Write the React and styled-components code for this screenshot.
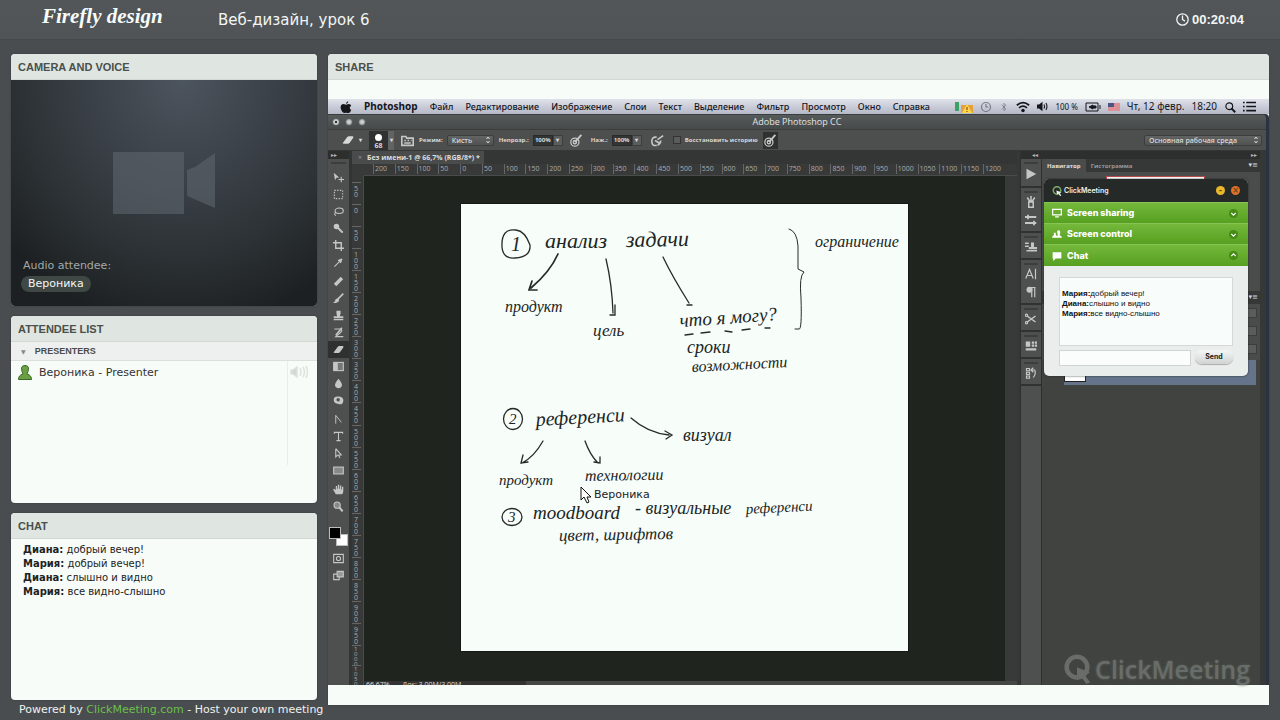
import React, {useState} from 'react';
import styled, {createGlobalStyle} from 'styled-components'

const GlobalStyle = createGlobalStyle`
  * { box-sizing: border-box; }
  body {
    margin: 0;
    background: #4a4d50;
    font-family: "DejaVu Sans", Verdana, sans-serif;
    color: #333;
  }
  button, input, select { font: inherit; color: inherit; margin: 0; padding: 0; border: 0; background: none; }
`

const Page = styled.div`
  display: flex;
  flex-direction: column;
  min-height: 100vh;
`

const Header = styled.header`
  display: flex;
  align-items: center;
  height: 40px;
  padding: 0 36px 0 42px;
  background: linear-gradient(#525659, #505457);
  border-bottom: 1px solid #45484a;
  color: #f3f6f4;
`

const Logo = styled.a`
  flex: 0 0 176px;
  font: italic bold 21px/32px "Liberation Serif", serif;
  color: #f7fcf9;
  text-decoration: none;
  margin-bottom: 8px;
`

const Title = styled.h1`
  flex: 1;
  margin: 0;
  font-size: 15px;
  font-weight: 400;
`

const Timer = styled.div`
  display: flex;
  align-items: center;
  gap: 3px;
  font: bold 13px/16px "Liberation Sans", Arial, sans-serif;
`

const Main = styled.main`
  flex: 1;
  display: grid;
  grid-template-columns: 306px minmax(0, 1fr);
  gap: 11px;
  padding: 14px 11px 0;
`

const Side = styled.div`
  display: flex;
  flex-direction: column;
  gap: 10px;
  padding-bottom: 5px;
`

const Panel = styled.section`
  display: flex;
  flex-direction: column;
  flex: ${p => p.$grow || '1 1 0'};
  border-radius: 4px 4px ${p => p.$square ? '0 0' : '4px 4px'};
  overflow: hidden;
  background: #f7fcf9;
  box-shadow: 0 0 2px #35383a;
`

const PanelTitle = styled.h2`
  flex: none;
  margin: 0;
  padding: 0 7px;
  height: 26px;
  font: bold 11px/27px "Liberation Sans", Arial, sans-serif;
  color: #4a504d;
  background: #dfe5e0;
  border-bottom: 1px solid #d2d8d4;
`

const Camera = styled.div`
  flex: 1;
  display: flex;
  flex-direction: column;
  align-items: flex-start;
  padding: 72px 10px 14px;
  background: radial-gradient(ellipse 75% 110% at 56% 0, #4c545e, #2d3236 70%, #1c2022);
  color: #a3a8a7;
  font-size: 11px;
  > svg { align-self: center; margin-bottom: auto; }
  > span { padding-left: 2px; line-height: 14px; }
`

const Pill = styled.b`
  margin-top: 3px;
  padding: 0 7px;
  border-radius: 8px;
  background: #3f4845;
  color: #f3f7f5;
  font-weight: 400;
  line-height: 16px;
`

const Group = styled.button`
  display: flex;
  align-items: center;
  gap: 9px;
  height: 19px;
  && { padding: 0 10px; background: #eeefef; border-bottom: 1px solid #dcdfdd; }
  font: bold 9px/18px "Liberation Sans", Arial, sans-serif;
  color: #4a4d4b;
  > i { font: 6px "DejaVu Sans"; color: #888; }
`

const Attendee = styled.div`
  display: grid;
  grid-template-columns: 18px 1fr 24px;
  align-items: center;
  height: 22px;
  padding: 0 3px 0 7px;
  gap: 3px;
  font-size: 11px;
`

const AttendeeBody = styled.div`
  flex: 1;
  margin-bottom: 38px;
  background: linear-gradient(90deg, transparent 276px, #e9eeea 276px, #e9eeea 277px, transparent 277px);
`

const Messages = styled.ul`
  margin: 0;
  padding: 4px 12px;
  list-style: none;
  font-size: 10px;
  line-height: 14px;
  color: #222;
`

const Footer = styled.footer`
  height: 15px;
  padding: 0 19px;
  font-size: 11px;
  line-height: 10px;
  color: #f0f3f1;
  a { color: #6cc04a; text-decoration: none; }
`

// ---- shared desktop

const Screen = styled.div`
  flex: 1;
  display: flex;
  flex-direction: column;
  padding: 19px 0 20px;
`

const MacBar = styled.nav`
  display: flex;
  align-items: center;
  height: 15px;
  padding: 0 13px 0 12px;
  background: linear-gradient(#dfe1ea, #b5b8c6);
  font: 10px/15px "Noto Sans", "Open Sans", sans-serif;
  color: #15161c;
  white-space: nowrap;
  > div { display: flex; align-items: center; gap: 12px; }
  > div + div { margin-left: auto; gap: 7px; }
  small { font-size: 8px; }
`

const MenuItem = styled.button`
  font-size: ${p => p.$app ? '10px' : '9px'};
  font-weight: ${p => p.$app ? 700 : 500};
`

const AppWindow = styled.div`
  flex: 1;
  display: flex;
  flex-direction: column;
  min-height: 0;
  margin-right: 3px;
  border-radius: 0 4px 0 0;
  background: #4d4e4e;
  box-shadow: 3px 0 0 #2c3340;
  color: #d8d8d8;
  font: 7px/10px "Open Sans", "Noto Sans", sans-serif;
`

const WindowBar = styled.div`
  display: grid;
  grid-template-columns: 1fr auto 1fr;
  align-items: center;
  height: 15px;
  padding: 0 4px;
  border-radius: 0 4px 0 0;
  background: linear-gradient(#555a5b, #474a4b);
  border-top: 1px solid #3a3d3e;
  font-size: 9px;
  color: #e3e6e5;
`

const Lights = styled.div`
  display: flex;
  gap: 5px;
  > i { width: 8px; height: 8px; border-radius: 50%; background: radial-gradient(#dfe5e3, #818786); border: 1px solid #5a5f5f; }
  > i:first-child { background: radial-gradient(#333 25%, #c5cac8 35%); }
`

const Options = styled.div`
  display: flex;
  align-items: center;
  gap: 5px;
  height: 22px;
  padding: 0 4px 0 14px;
  border-top: 1px solid #3b3c3c;
  border-bottom: 1px solid #353636;
  font-size: 6px;
  font-weight: 700;
  white-space: nowrap;
  > label { display: flex; align-items: center; gap: 4px; }
`

const Dropdown = styled.select`
  width: ${p => p.$width};
  height: 11px;
  && { padding: 0 4px; border: 1px solid #3c3d3d; background: linear-gradient(#626464, #505252); }
  appearance: none;
  border-radius: 2px;
  font-size: 7px;
  font-weight: 600;
  line-height: 9px;
`

const DropWrap = styled.span`
  display: inline-grid;
  align-items: center;
  margin-left: ${p => p.$end ? 'auto' : 0};
  > * { grid-area: 1 / 1; }
  > svg { justify-self: end; margin-right: 2px; pointer-events: none; }
`

const Percent = styled.span`
  display: flex;
  > input { width: 20px; height: 11px; background: #333434; border: 1px solid #292a2a; text-align: center; }
  > button { width: 10px; height: 11px; background: #5b5d5d; border: 1px solid #3c3d3d; line-height: 8px; }
`

const BrushGroup = styled.div`
  display: flex;
  margin: 0 1px 0 2px;
  > button + button { width: 6px; height: 19px; background: #626464; }
`

const BrushPick = styled.button`
  display: flex;
  flex-direction: column;
  align-items: center;
  width: 19px;
  height: 19px;
  && { padding-top: 3px; background: #303131; }
  font-size: 7px;
  line-height: 9px;
  > i { width: 7px; height: 7px; border-radius: 50%; background: #fff; }
`

const Tick = styled.input`
  appearance: none;
  width: 8px;
  height: 8px;
  && { border: 1px solid #333; background: #5a5b5b; }
`

const IconButton = styled.button`
  display: flex;
  align-items: center;
  justify-content: center;
  height: ${p => p.$h || '17px'};
  width: ${p => p.$w || '21px'};
  color: #c4c7c5;
  && { background: ${p => p.$on ? '#2f3030' : 'none'}; }
`

const Workspace = styled.div`
  flex: 1;
  display: grid;
  grid-template-columns: 24px minmax(0, 1fr) 3px 22px 218px 6px;
  min-height: 0;
  background: #363737;
`

const Tools = styled.div`
  background: #4e4f4f;
  border-right: 3px solid #323333;
`

const Strip = styled.div`
  height: 8px;
  background: #2d2e2e;
  font: 6px/7px "DejaVu Sans", sans-serif;
  color: #b5b5b5;
  padding: 0 3px;
  text-align: ${p => p.$end ? 'right' : 'left'};
`

const Grip = styled.div`
  height: 2px;
  margin: 3px 3px ${p => p.$gap || '5px'};
  background: #3c3d3d;
`

const ToolGroup = styled.div`
  margin-bottom: 2px;
`

const Swatches = styled.div`
  position: relative;
  height: 20px;
  margin: 12px 0 3px 1px;
  > i { position: absolute; width: 12px; height: 12px; border: 1px solid #bbb; background: #000; }
  > i + i { left: 7px; top: 7px; background: #fff; z-index: 0; }
  > i:first-child { z-index: 1; }
`

const Doc = styled.div`
  display: grid;
  grid-template: 13px 12px minmax(0, 1fr) 4px / 12px minmax(0, 1fr) 12px;
  background: #383939;
`

const DocTabs = styled.div`
  grid-column: 1 / -1;
  background: #343535;
  > button {
    height: 13px;
    padding: 0 4px 0 6px;
    background: #4a4b4b;
    font-weight: 700;
    line-height: 12px;
    color: #dcdcdc;
  }
  i { font-style: normal; font-weight: 400; color: #999; margin-right: 5px; }
`

const RulerX = styled.div`
  display: flex;
  grid-column: 2 / 4;
  padding-left: 9px;
  overflow: hidden;
  border-bottom: 1px solid #4a4b4b;
  color: #a9acaa;
  > span { flex: 0 0 calc((100% - 12px) / 29); height: 10px; padding-left: 1px; border-left: 1px solid #666; line-height: 9px; }
`

const RulerY = styled.div`
  grid-row: 3 / 5;
  display: flex;
  flex-direction: column;
  padding-top: 6px;
  overflow: hidden;
  border-right: 1px solid #4a4b4b;
  color: #a9acaa;
  > span {
    flex: 1 0 0;
    min-height: 0;
    width: 9px;
    padding: 3px 4px 0 2px;
    border-top: 1px solid #666;
    line-height: 6px;
    word-break: break-all;
  }
  > span:nth-last-child(-n + 2) { padding-top: 1px; font-size: 6px; line-height: 5px; }
`

const Board = styled.div`
  display: grid;
  place-items: center;
  padding-bottom: 2px;
  background: #20241f;
  overflow: hidden;
`

const Paper = styled.div`
  position: relative;
  width: 447px;
  height: 447px;
  background: #f7fdf9;
  outline: 1px solid #151815;
  > svg { display: block; width: 100%; height: auto; }
`

const Pointer = styled.div`
  position: absolute;
  left: 119px;
  top: 281px;
  display: flex;
  align-items: center;
  gap: 1px;
  font: 11px/20px "DejaVu Sans", sans-serif;
  color: #222;
`

const Status = styled.div`
  grid-column: 2 / 4;
  overflow: hidden;
  padding-left: 2px;
  line-height: 8px;
  background: linear-gradient(90deg, #333 162px, #454646 162px);
`

const Dock = styled.div`
  background: #4e4f4f;
  border: solid #2e2f2f;
  border-width: 0 1px;
`

const DockGroup = styled.div`
  padding-bottom: 2px;
  border-bottom: 2px solid #303131;
`

const Panels = styled.div`
  position: relative;
  display: flex;
  flex-direction: column;
  background: #40433f;
`

const PanelTabs = styled.div`
  display: flex;
  height: 13px;
  background: #363737;
  font-size: 6px;
  font-weight: 700;
  > button { padding: 0 5px; color: #999; }
  > button:first-child { background: #4a4b4b; color: #e0e0e0; }
  > i { margin-left: auto; font: 7px/12px "DejaVu Sans"; margin-right: 2px; }
`

const NavigatorView = styled.div`
  height: 119px;
  padding: 4px 55px 0 64px;
  background: #4a4b4b;
  > i { display: block; height: 4px; background: #fff; border: solid #b64b4b; border-width: 1px 1px 0; }
`

const LayerControls = styled.div`
  display: flex;
  flex-direction: column;
  align-items: flex-end;
  height: 56px;
  padding: 4px 3px;
  gap: 8px;
  background: #4a4b4b;
  > i { width: 10px; height: 10px; background: #5a5b5b; border: 1px solid #3c3d3d; }
`

const Layer = styled.div`
  height: 25px;
  margin: 0 4px 0 22px;
  padding: 3px 0;
  background: #65748a;
  > i { display: block; width: 22px; height: 19px; background: #fff; border: 1px solid #222; }
`

const Watermark = styled.div`
  display: flex;
  align-items: center;
  justify-content: flex-end;
  gap: 3px;
  margin: auto 10px 0 0;
  height: 32px;
  color: #686d69;
  font: 600 25px/30px "Open Sans", sans-serif;
  text-shadow: 0 0 3px #5b605b;
`

const Widget = styled.aside`
  position: absolute;
  left: 2px;
  top: 28px;
  width: 204px;
  border-radius: 5px;
  overflow: hidden;
  background: #e9eeec;
  font-family: Inter, "Open Sans", sans-serif;
  color: #222;
  box-shadow: 0 0 2px #222;
`

const WidgetTitle = styled.div`
  display: flex;
  align-items: center;
  gap: 2px;
  height: 23px;
  padding: 0 8px;
  background: #252927;
  color: #eef2f0;
  font-size: 7px;
  font-weight: 600;
`

const Round = styled.button`
  width: 9px;
  height: 9px;
  && { background: ${p => p.$color}; }
  border-radius: 50%;
  font: bold 8px/8px "DejaVu Sans", sans-serif;
  color: #6b4a10;
  margin-left: ${p => p.$first ? 'auto' : '4px'};
`

const Section = styled.button`
  display: flex;
  align-items: center;
  gap: 5px;
  width: 100%;
  && { padding: 0 10px 0 8px; height: ${p => p.$last ? '22px' : '21px'}; }
  && { background: linear-gradient(#74b83c, #57a020); border-top: 1px solid #86c455; }
  font-weight: 800;
  font-size: 9px;
  color: #fff;
  > span { flex: 1; text-align: left; }
`

const WidgetChat = styled.form`
  display: grid;
  grid-template-columns: 1fr 38px;
  gap: 4px;
  padding: 11px 15px 10px;
  > ul {
    grid-column: 1 / -1;
    height: 69px;
    margin: 0;
    padding: 11px 2px;
    list-style: none;
    background: #f8fcfa;
    border: 1px solid #d4d9d7;
    font: 8px/10px "Liberation Sans", Arial, sans-serif;
    color: #111;
  }
  > input { min-width: 0; height: 16px; background: #fbfdfc; border: 1px solid #d0d5d3; }
  > button { height: 14px; border-radius: 7px; background: linear-gradient(#f5f7f6, #cfd3d1); box-shadow: 0 1px 1px #aaa; font-size: 7px; font-weight: 700; }
`

const Ico = ({size = 13, children, fill = 'none', box = 16}) => (
  <svg width={size} height={size} viewBox={`0 0 ${box} ${box}`} fill={fill} stroke='currentColor' strokeWidth='1.6' aria-hidden='true'>{children}</svg>
)

const solid = {fill: 'currentColor', stroke: 'none'}

const eraser = <path {...solid} d='M1 12l6-8q1-1 2-1h5q2 0 1 2l-5 7q-1 1-2 1H3q-3 0-2-1z' />
const penBrush = <><circle cx='6' cy='10' r='5' /><circle cx='6' cy='10' r='2' /><path d='M6 10l8-9' strokeWidth='2.4' /></>

const toolGroups = [
  [
    ['Move', <><path {...solid} d='M1 1l8 7-4 .5L3 12z' /><path d='M12 7v8M8 11h8' /></>],
    ['Marquee', <rect x='2' y='2' width='12' height='12' strokeDasharray='2 2' />],
    ['Lasso', <><ellipse cx='9' cy='7' rx='6' ry='4' /><path d='M4 9q-3 3 0 5' /></>],
    ['Quick selection', <><circle {...solid} cx='5' cy='5' r='4' /><path d='M7 7l7 7' strokeWidth='3' /></>],
    ['Crop', <path d='M4 0v12h12M0 4h12v12' strokeWidth='2' />],
    ['Eyedropper', <><path d='M2 14l7-7' /><path d='M8 4l4 4M9 7l4-4' strokeWidth='3' /></>]
  ],
  [
    ['Healing brush', <path d='M3 13L13 3' strokeWidth='5' />],
    ['Brush', <><path d='M15 1L7 9' strokeWidth='2.4' /><path {...solid} d='M8 8q-5-1-5 4l-3 2q7 2 9-3z' /></>],
    ['Clone stamp', <path {...solid} d='M5 1h6v4l-1 4h5v3H1V9h5L5 5zM1 13h14v2H1z' />],
    ['History brush', <><path d='M2 3h8q5 1 1 5l-7 6h11' /><path d='M13 1L4 12' strokeWidth='2.4' /></>],
    ['Eraser', eraser],
    ['Gradient', <><rect x='1' y='2' width='14' height='12' fill='#777' /><path {...solid} d='M1 2h6v12H1z' /></>],
    ['Blur', <path {...solid} d='M8 1q6 7 5 10-1 4-5 4t-5-4q-1-3 5-10z' />],
    ['Dodge', <path {...solid} fillRule='evenodd' d='M1 7q0-5 6-5 9 0 8 7-1 6-7 4-7 0-7-6zm4 0a2.500 2.500 0 105 0 2.500 2.500 0 10-5 0z' />]
  ],
  [
    ['Pen', <path d='M4 14V2l8 10' strokeWidth='1.4' />],
    ['Type', <path d='M2 4V2h12v2M8 2v12M5 14h6' />],
    ['Path selection', <path d='M4 1l8 9-4 .5 2 4M4 1v12l3-3' />],
    ['Rectangle', <rect x='1' y='3' width='14' height='10' fill='#888' />]
  ],
  [
    ['Hand', <path {...solid} d='M4 15q-2-4-4-7l2-1 2 2V3h2v4h1V1h2v6h1V2h2v6h1V4h2v6q0 4-2 5z' />],
    ['Zoom', <><circle cx='6' cy='6' r='4.500' fill='#888' /><path d='M9 9l5 6' strokeWidth='3' /></>]
  ]
]

const dockGroups = [
  ['Play', <path {...solid} d='M2 1l13 7-13 7z' />],
  ['Brushes', <path d='M5 8h6v7H5zM7 8L3 2M8 8V0M9 8l4-6' strokeWidth='2' />, <path d='M0 4h15M0 12h15M4 1v6M12 9v6' strokeWidth='2.4' />],
  ['Clone source', <path {...solid} d='M0 2h5v2H0zM0 6h5v2H0zM8 2h4v6h4v3H5V8h3zM2 12h14v2H2z' />],
  ['Character', <path d='M1 14L6 2l5 12M3 10h6M14 1v14' />, <><path d='M9 2v13M13 2v13M6 2h8' /><circle {...solid} cx='6' cy='5' r='4' /></>],
  ['Presets', <><path d='M3 4l11 8M3 12L14 4' strokeWidth='2' /><circle cx='2' cy='3' r='1.5' /><circle cx='2' cy='13' r='1.5' /></>],
  ['Layer comps', <path {...solid} d='M1 2h6v7H1zM9 2h3v3H9zM13 2h3v3h-3zM9 6h3v3H9zM13 6h3v3h-3zM1 11h14v3H1z' />],
  ['History', <><path d='M2 2h4v3H2zM2 7h4v3H2zM2 12h4v3H2z' /><path d='M9 4h4q2 5-2 10M11 1L8 4l3 3' /></>]
]

const menus = ['Файл', 'Редактирование', 'Изображение', 'Слои', 'Текст', 'Выделение', 'Фильтр', 'Просмотр', 'Окно', 'Справка']

const messages = [
  ['Диана:', 'добрый вечер!'],
  ['Мария:', 'добрый вечер!'],
  ['Диана:', 'слышно и видно'],
  ['Мария:', 'все видно-слышно']
]

const ticks = (from, to) => {
  const out = []
  for (let n = from; n <= to; n += 50) out.push(Math.abs(n))
  return out
}

// words of the lesson plan: x, baseline, size, tilt, text
const words = [
  [84, 44, 22, 0, 'анализ'],
  [165, 43, 22, -1, 'задачи'],
  [354, 43, 16, 0, 'ограничение'],
  [44, 108, 16, 0, 'продукт'],
  [132, 132, 17, 0, 'цель'],
  [219, 123, 19, -4, 'что я могу?'],
  [226, 149, 18, 0, 'сроки'],
  [231, 168, 16, -3, 'возможности'],
  [75, 222, 20, -3, 'референси'],
  [222, 237, 18, 0, 'визуал'],
  [38, 281, 15, 0, 'продукт'],
  [124, 277, 16, -1, 'технологии'],
  [72, 315, 19, 0, 'moodboard'],
  [174, 310, 18, 0, '- визуальные'],
  [285, 310, 15, -3, 'референси'],
  [98, 337, 17, -1, 'цвет, шрифтов']
]

const Sketch = () => (
  <svg viewBox='0 0 447 447' fill='none' stroke='#262b28' strokeWidth='1.3' strokeLinecap='round'>
    <path d='M55 26q-15-2-14 17 1 12 13 11 16-1 15-13Q64 27 55 26z' />
    <ellipse cx='52' cy='215' rx='9.500' ry='10.500' />
    <ellipse cx='51' cy='313' rx='10' ry='8.500' />
    <path d='M97 50Q89 68 70 84M71 77l-3 9 8 0' strokeWidth='1.7' />
    <path d='M145 55q6 25 7 54M154 101v10h-5' />
    <path d='M202 53q9 19 26 46M226 101h5' />
    <path d='M328 25q8 2 9 17v23l6 3q-5 4-3 26 1 32-2 31h-4' strokeWidth='1' />
    <path d='M224 131l8-1M240 129l9-1M264 127l7 1M281 126l8-1M304 124l5 0' />
    <path d='M170 214q17 15 38 17M204 227l7 4-6 4' />
    <path d='M82 237q-9 16-21 22M62 251l-2 8 7-1' />
    <path d='M124 237q5 14 13 22M133 258l6 1v-6' />
    <g fill='#20251f' stroke='none' fontFamily='"Liberation Serif", serif' fontStyle='italic'>
      <text x='50' y='47' fontSize='20'>1</text>
      <text x='48' y='220' fontSize='15'>2</text>
      <text x='47' y='318' fontSize='15'>3</text>
      {words.map(([x, y, size, tilt, text]) => (
        <text key={x} x={x} y={y} fontSize={size} transform={`rotate(${tilt} ${x} ${y})`}>{text}</text>
      ))}
    </g>
  </svg>
)

const Arrows = () => <Ico size={8}><path d='M5 6l3-4 3 4M5 10l3 4 3-4' strokeWidth='2' /></Ico>

const PhotoshopOptions = () => {
  const [keep, setKeep] = useState(false)
  return (
    <Options>
      <Ico size={12}>{eraser}</Ico><span>▾</span>
      <BrushGroup>
        <BrushPick aria-label='Brush'><i />68</BrushPick>
        <button tabIndex={-1}>▾</button>
      </BrushGroup>
      <IconButton $w='14px' aria-label='Brush panel'><Ico><path d='M1 3h5l1 2h8v9H1zM4 8h2M8 8h2M12 8h1M4 11h8' strokeWidth='2' /></Ico></IconButton>
      <label>Режим:
        <DropWrap><Dropdown $width='47px'><option>Кисть</option></Dropdown><Arrows /></DropWrap>
      </label>
      <label>Непрозр.:<Percent><input defaultValue='100%' /><button tabIndex={-1}>▾</button></Percent></label>
      <IconButton $w='18px' aria-label='Pressure opacity'><Ico>{penBrush}</Ico></IconButton>
      <label>Наж.:<Percent><input defaultValue='100%' /><button tabIndex={-1}>▾</button></Percent></label>
      <IconButton aria-label='Airbrush'><Ico><path d='M7 4Q1 3 1 9t6 5M8 14q4-2 4-6M8 7l7-5M5 8l5 3' strokeWidth='2' /></Ico></IconButton>
      <label><Tick type='checkbox' checked={keep} onChange={() => setKeep(!keep)} />Восстановить историю</label>
      <IconButton $w='15px' $on aria-label='Pressure size'><Ico>{penBrush}</Ico></IconButton>
      <DropWrap $end><Dropdown $width='118px' aria-label='Workspace'><option>Основная рабочая среда</option></Dropdown><Arrows /></DropWrap>
    </Options>
  )
}

const MacMenu = () => (
  <MacBar>
    <div>
      <Ico size={12}><path {...solid} d='M11 0q0 3-3 4 0-3 3-4zM8 5q2-1 4-1 2 0 3 2-4 3 0 6-2 5-5 4-2-1-4 0-3 0-5-6Q0 5 4 4q2 0 4 1z' /></Ico>
      <MenuItem $app>Photoshop</MenuItem>
      {menus.map(m => <MenuItem key={m}>{m}</MenuItem>)}
    </div>
    <div>
      <svg width='18' height='12' viewBox='0 0 18 12'><path fill='#3da167' d='M0 1h4v9H0z' /><path fill='#e8a13a' d='M6 4h12v8H6z' /><path fill='#ffd84a' d='M12 3l5 9H7z' /><path stroke='#7a2b10' d='M12 6v3M12 10v1' /></svg>
      <Ico size={12}><g opacity='.45'><circle cx='8' cy='8' r='6' /><path d='M8 4v4h3' /></g></Ico>
      <Ico size={10}><path opacity='.3' d='M4 4l7 7-3 3V2l3 3-7 7' /></Ico>
      <Ico size={14}><path d='M1 6q7-6 14 0M3.500 9q4.500-4 9 0' strokeWidth='2' /><circle {...solid} cx='8' cy='12' r='2' /></Ico>
      <Ico size={11}><path {...solid} d='M0 5h3l5-4v14l-5-4H0z' /><path d='M10 5q2 3 0 6M13 3q3 5 0 10' /></Ico>
      <small>100 %</small>
      <svg width='16' height='10' viewBox='0 0 16 10' fill='none' stroke='#15161c'><path d='M1 1h12v8H1zM15 3v4' /><path fill='#15161c' d='M4 5l4-2v4zM8 4h3v2H8z' /></svg>
      <svg width='12' height='8' viewBox='0 0 12 8'><path fill='#f1dfe0' d='M0 0h12v8H0z' /><path stroke='#c5434b' d='M0 1h12M0 3h12M0 5h12M0 7h12' /><path fill='#4b5585' d='M0 0h6v4H0z' /></svg>
      <span>Чт, 12 февр.</span>
      <span>18:20</span>
      <Ico size={12}><circle cx='7' cy='7' r='4.500' /><path d='M10 10l5 5' strokeWidth='2.4' /></Ico>
      <Ico size={13}><path d='M0 3h2M4 3h12M0 8h2M4 8h12M0 13h2M4 13h12' strokeWidth='2' /></Ico>
    </div>
  </MacBar>
)

const ClickMeetingWidget = () => (
  <Widget>
    <WidgetTitle>
      <Ico size={10}><circle cx='8' cy='7' r='6' stroke='#7fa66a' strokeWidth='2.4' /><path {...solid} d='M7 7l8 3-3 1 3 4-2 1-3-4-2 2z' /></Ico>
      ClickMeeting
      <Round $first $color='#e9b92b' aria-label='Minimize'>-</Round>
      <Round $color='#e2702b' aria-label='Close'>×</Round>
    </WidgetTitle>
    <Section>
      <Ico size={10}><path d='M1 2h14v9H1zM5 14h6' strokeWidth='2' /></Ico>
      <span>Screen sharing</span>
      <Ico size={9}><circle {...solid} cx='8' cy='8' r='8' fill='#468a18' /><path d='M4 7l4 4 4-4' strokeWidth='2' /></Ico>
    </Section>
    <Section>
      <Ico size={10}><path {...solid} d='M0 14q0-3 3-4V6h3v4l3 1V8Q7 3 10 2q4 0 3 5l-1 3q4 1 4 4z' /></Ico>
      <span>Screen control</span>
      <Ico size={9}><circle {...solid} cx='8' cy='8' r='8' fill='#468a18' /><path d='M4 7l4 4 4-4' strokeWidth='2' /></Ico>
    </Section>
    <Section $last>
      <Ico size={10}><path {...solid} d='M1 2h14v10H6l-4 4v-4H1z' /></Ico>
      <span>Chat</span>
      <Ico size={9}><circle {...solid} cx='8' cy='8' r='8' fill='#468a18' /><path d='M4 9l4-4 4 4' strokeWidth='2' /></Ico>
    </Section>
    <WidgetChat onSubmit={e => e.preventDefault()}>
      <ul>{messages.slice(1).map(([who, text]) => <li key={text}><b>{who}</b>{text}</li>)}</ul>
      <input aria-label='Message' />
      <button>Send</button>
    </WidgetChat>
  </Widget>
)

const SharedScreen = () => (
  <Screen>
    <MacMenu />
    <AppWindow>
      <WindowBar><Lights><i /><i /><i /></Lights>Adobe Photoshop CC</WindowBar>
      <PhotoshopOptions />
      <Workspace>
        <Tools>
          <Strip>▸▸</Strip>
          <Grip />
          {toolGroups.map((group, i) => (
            <ToolGroup key={i}>
              {group.map(([name, icon]) => (
                <IconButton key={name} aria-label={name} $on={name === 'Eraser'}><Ico size={11}>{icon}</Ico></IconButton>
              ))}
            </ToolGroup>
          ))}
          <Swatches><i /><i /></Swatches>
          <IconButton aria-label='Quick mask'><Ico size={11}><path d='M1 2h14v12H1z' /><circle cx='8' cy='8' r='3' /></Ico></IconButton>
          <IconButton aria-label='Screen mode'><Ico size={11}><path d='M1 6h8v8H1z' /><path fill='#999' d='M6 2h9v8H6z' /></Ico></IconButton>
        </Tools>
        <Doc>
          <DocTabs><button><i>×</i>Без имени-1 @ 66,7% (RGB/8*) *</button></DocTabs>
          <span />
          <RulerX>{ticks(-200, 1200).map((n, i) => <span key={i}>{n}</span>)}</RulerX>
          <RulerY>{ticks(-50, 1050).map((n, i) => <span key={i}>{n}</span>)}</RulerY>
          <Board>
            <Paper>
              <Sketch />
              <Pointer>
                <svg width='13' height='18' viewBox='0 0 13 18'><path fill='#fff' stroke='#111' d='M1 1v13l3-3 3 6 2-1-2-5h4z' /></svg>
                Вероника
              </Pointer>
            </Paper>
          </Board>
          <span />
          <Status>66,67% &nbsp; &nbsp; &nbsp; Док: 3,00M/3,00M</Status>
        </Doc>
        <span />
        <Dock>
          <Strip $end>◂◂</Strip>
          {dockGroups.map(([name, ...icons], i) => (
            <DockGroup key={name}>
              <Grip $gap='0' />
              {icons.map((icon, k) => (
                <IconButton key={k} $h={i ? '18px' : '20px'} $w='20px' aria-label={name}><Ico size={12}>{icon}</Ico></IconButton>
              ))}
            </DockGroup>
          ))}
        </Dock>
        <Panels>
          <Strip $end>▸▸</Strip>
          <PanelTabs><button>Навигатор</button><button>Гистограмма</button><i>▾≡</i></PanelTabs>
          <NavigatorView><i /></NavigatorView>
          <PanelTabs><i>▾≡</i></PanelTabs>
          <LayerControls><i /><i /><i /></LayerControls>
          <Layer><i /></Layer>
          <Watermark>
            <Ico size={30}><circle cx='8' cy='7' r='5.500' strokeWidth='2.4' /><path {...solid} d='M8 7l7 3-3 1 3 4-2 1-3-4-2 2z' /></Ico>
            ClickMeeting
          </Watermark>
          <ClickMeetingWidget />
        </Panels>
      </Workspace>
    </AppWindow>
  </Screen>
)

const App = () => (
  <Page>
    <GlobalStyle />
    <Header>
      <Logo href='#'>Firefly design</Logo>
      <Title>Веб-дизайн, урок 6</Title>
      <Timer>
        <Ico size={13}><circle cx='8' cy='8' r='7' /><path d='M8 3v5l3 2' /></Ico>
        00:20:04
      </Timer>
    </Header>
    <Main>
      <Side>
        <Panel $grow='252 1 0'>
          <PanelTitle>CAMERA AND VOICE</PanelTitle>
          <Camera>
            <svg width='102' height='64' viewBox='0 0 102 64' fill='#616970' opacity='.55'><path d='M0 0h71v62H0zM74 18l8-3 20-14v55L74 44z' /></svg>
            <span>Audio attendee:</span>
            <Pill>Вероника</Pill>
          </Camera>
        </Panel>
        <Panel $grow='187 1 0'>
          <PanelTitle>ATTENDEE LIST</PanelTitle>
          <Group><i>▼</i>PRESENTERS</Group>
          <AttendeeBody>
            <Attendee>
              <svg width='14' height='15' viewBox='0 0 14 15' fill='#6aa043' stroke='#3c6a26'><path d='M7 .5q4 0 3.500 4Q10 7 9 9q4.500 1 4.500 5.500H.5Q.5 10 5 9 4 7 3.500 4.500 3 .5 7 .5z' /></svg>
              Вероника - Presenter
              <svg width='18' height='12' viewBox='0 0 18 12' fill='none' stroke='#dde2df' strokeWidth='1.5'><path fill='#d2d7d4' d='M1 4h2l4-3v10L3 8H1z' /><path d='M10 2q2 4 0 8M13 1q3 5 0 10M16 0q3 6 0 12' /></svg>
            </Attendee>
          </AttendeeBody>
        </Panel>
        <Panel $grow='187 1 0'>
          <PanelTitle>CHAT</PanelTitle>
          <Messages>
            {messages.map(([who, text]) => <li key={who + text}><b>{who}</b> {text}</li>)}
          </Messages>
        </Panel>
      </Side>
      <Panel $square>
        <PanelTitle>SHARE</PanelTitle>
        <SharedScreen />
      </Panel>
    </Main>
    <Footer>Powered by <a href='#'>ClickMeeting.com</a> - Host your own meeting</Footer>
  </Page>
)

export default App
